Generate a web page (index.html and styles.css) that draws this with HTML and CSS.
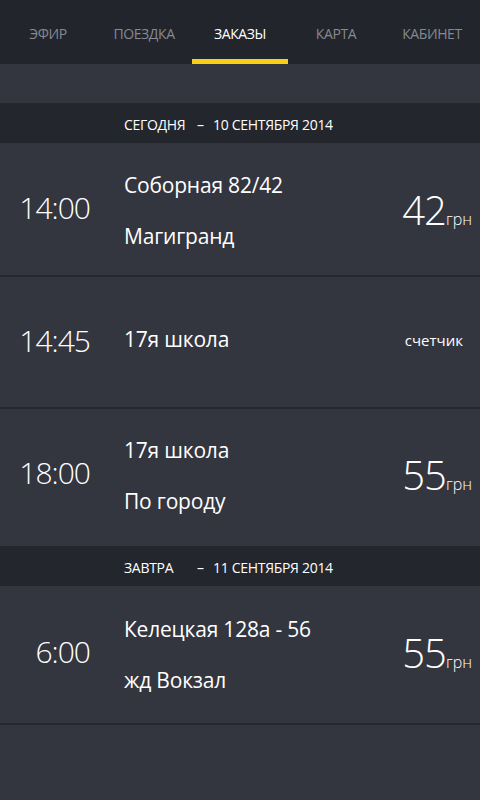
FILE: index.html
```html
<!DOCTYPE html>
<html lang="ru">
<head>
    <meta charset="UTF-8">
    <meta name="viewport" content="width=device-width, initial-scale=1.0">
    <title>Заказы</title>
    <link rel="stylesheet" href="styles.css">
</head>
<body>

<!-- Вкладки -->
<nav class="tabs">
    <div class="tab">ЭФИР</div>
    <div class="tab">ПОЕЗДКА</div>
    <div class="tab active">ЗАКАЗЫ</div>
    <div class="tab">КАРТА</div>
    <div class="tab">КАБИНЕТ</div>
</nav>

<div class="orders">
    <div class="day-header">
        <span class="day">СЕГОДНЯ</span>
        <span class="dash">–</span>
        <span>10 СЕНТЯБРЯ 2014</span>
    </div>

    <div class="order">
        <div class="time">14:00</div>
        <div class="route">
            <div>Соборная 82/42</div>
            <div>Магигранд</div>
        </div>
        <div class="price">42<span class="cur">грн</span></div>
    </div>

    <div class="order single">
        <div class="time">14:45</div>
        <div class="route">
            <div>17я школа</div>
        </div>
        <div class="price meter">счетчик</div>
    </div>

    <div class="order last">
        <div class="time">18:00</div>
        <div class="route">
            <div>17я школа</div>
            <div>По городу</div>
        </div>
        <div class="price">55<span class="cur">грн</span></div>
    </div>

    <div class="day-header">
        <span class="day">ЗАВТРА</span>
        <span class="dash">–</span>
        <span>11 СЕНТЯБРЯ 2014</span>
    </div>

    <div class="order tall">
        <div class="time">6:00</div>
        <div class="route">
            <div>Келецкая 128а - 56</div>
            <div>жд Вокзал</div>
        </div>
        <div class="price">55<span class="cur">грн</span></div>
    </div>
</div>

</body>
</html>
```

FILE: styles.css
```css
body {
    margin: 0;
    background-color: #33363f;
    color: #ffffff;
    font-family: "Open Sans", Arial, sans-serif;
    height: 800px;
    overflow: hidden;
}
.tabs {
    display: flex;
    height: 64px;
    background-color: #22252c;
}
.tab {
    flex: 1;
    display: flex;
    justify-content: center;
    padding-top: 24px;
    box-sizing: border-box;
    font-size: 14px;
    color: #868990;
    letter-spacing: -0.4px;
}
.tab.active {
    color: #ffffff;
    border-bottom: 5px solid #f7d117;
}
.orders {
    padding-top: 39px;
}
.day-header {
    display: flex;
    align-items: center;
    height: 40px;
    box-sizing: border-box;
    padding: 3px 0 0 124px;
    background-color: #23262d;
    font-size: 14px;
    letter-spacing: -0.3px;
}
.day {
    width: 73px;
}
.dash {
    width: 16px;
}
.order {
    display: flex;
    align-items: center;
    min-height: 132px;
    border-bottom: 2px solid #25282e;
}
.order.single {
    min-height: 130px;
}
.order.last {
    min-height: 130px;
    padding-bottom: 7px;
    border-bottom: none;
}
.order.tall {
    min-height: 133px;
    padding-bottom: 4px;
}
.time {
    width: 90px;
    text-align: right;
    font-size: 30px;
    font-weight: 300;
    letter-spacing: -1px;
    padding-bottom: 3px;
}
.route {
    flex: 1;
    padding-left: 34px;
    font-size: 21px;
    font-weight: 500;
    letter-spacing: -0.2px;
    line-height: 51px;
    padding-top: 4px;
}
.single .route {
    padding-top: 0;
    padding-bottom: 6px;
}
.price {
    padding-right: 8px;
    font-size: 40px;
    font-weight: 300;
    letter-spacing: -1px;
}
.cur {
    font-size: 16px;
    letter-spacing: 0;
}
.price.meter {
    font-size: 15px;
    font-weight: 400;
    letter-spacing: 0;
    padding-right: 17px;
    padding-bottom: 4px;
}
```
